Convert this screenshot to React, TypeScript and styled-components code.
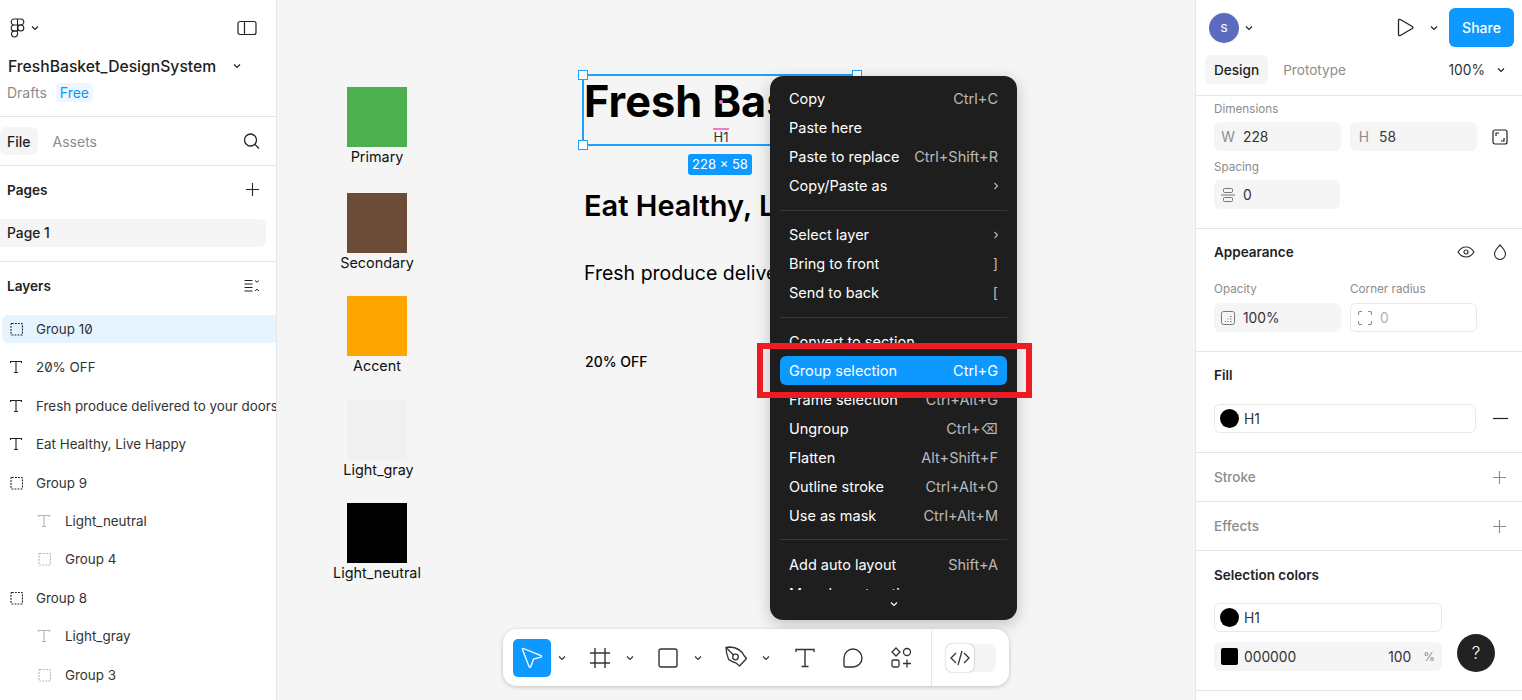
import styled, { createGlobalStyle } from 'styled-components'
import type { ReactNode } from 'react'

const GlobalStyle = createGlobalStyle`
  html, body {
    margin: 0;
    padding: 0;
    background: #fff;
  }
  body {
    font-family: Inter, "Noto Sans", "DejaVu Sans", sans-serif;
    font-size: 14px;
    color: #222;
  }
  * {
    box-sizing: border-box;
  }
`

const Page = styled.div`
  display: grid;
  grid-template-columns: 277px 1fr 327px;
  width: 1522px;
  height: 700px;
  overflow: hidden;
`

/* ---------- left panel ---------- */

const LeftPanel = styled.aside`
  display: flex;
  flex-direction: column;
  height: 700px;
  overflow: hidden;
  background: #fff;
  border-right: 1px solid #e6e6e6;
`

const PanelHeader = styled.header`
  height: 117px;
  border-bottom: 1px solid #e6e6e6;
`

const LogoRow = styled.div`
  display: flex;
  align-items: center;
  height: 56px;
  padding: 0 19px 0 10px;
  gap: 6px;
  color: #222;
`

const Spacer = styled.div`
  flex: 1;
`

const TitleRow = styled.div`
  display: flex;
  align-items: center;
  height: 20px;
  padding: 0 35px 0 8px;
  font-size: 15.7px;
  font-weight: 500;
  color: #1e1e1e;
`

const MetaRow = styled.div`
  display: flex;
  align-items: center;
  gap: 9px;
  height: 20px;
  margin-top: 6px;
  padding-left: 7px;
  font-size: 14px;
  color: #8c8c8c;
`

const FreeBadge = styled.span`
  padding: 1px 4px;
  border-radius: 4px;
  background: #eef7ff;
  color: #0d99ff;
`

const TabRow = styled.div`
  display: flex;
  align-items: center;
  height: 49px;
  padding-right: 16px;
  border-bottom: 1px solid #e6e6e6;
`

const Tab = styled.div<{ $active?: boolean; $inset?: number }>`
  display: flex;
  align-items: center;
  height: 28px;
  padding: 0 7px;
  margin-left: ${({ $inset }) => $inset ?? 0}px;
  border-radius: 6px;
  background: ${({ $active }) => ($active ? '#f5f5f5' : 'transparent')};
  color: ${({ $active }) => ($active ? '#1e1e1e' : '#8c8c8c')};
  font-weight: ${({ $active }) => ($active ? 500 : 400)};
  font-size: 14px;
`

const PagesSection = styled.section`
  height: 96px;
  border-bottom: 1px solid #e6e6e6;
`

const SectionHead = styled.div`
  display: flex;
  align-items: center;
  justify-content: space-between;
  height: 48px;
  padding: 0 16px 1px 7px;
  font-size: 13.6px;
  font-weight: 600;
  color: #222;
`

const PageRow = styled.div`
  display: flex;
  align-items: center;
  width: 266px;
  height: 28px;
  margin-top: 5px;
  padding-left: 7px;
  border-radius: 0 6px 6px 0;
  background: #f5f5f5;
  font-weight: 500;
  font-size: 13.8px;
`

const LayerList = styled.div`
  display: flex;
  flex-direction: column;
  gap: 10.4px;
  margin-top: 5px;
`

const LayerRow = styled.div<{ $selected?: boolean; $nested?: boolean }>`
  display: flex;
  flex: none;
  align-items: center;
  gap: ${({ $nested }) => ($nested ? 14 : 13)}px;
  height: 28px;
  margin-left: 2px;
  padding-left: ${({ $nested }) => ($nested ? 35 : 7)}px;
  border-radius: 6px 0 0 6px;
  background: ${({ $selected }) => ($selected ? '#e5f4ff' : 'transparent')};
  color: #333;
  font-size: 13.4px;
  font-feature-settings: 'zero' 1;
  white-space: nowrap;
  overflow: hidden;
`

const LayerIcon = styled.span<{ $muted?: boolean }>`
  display: flex;
  flex: none;
  color: ${({ $muted }) => ($muted ? '#b3b3b3' : '#222')};
`

/* ---------- canvas ---------- */

const Canvas = styled.main`
  position: relative;
  height: 700px;
  overflow: hidden;
  background: #f5f5f5;
`

const SwatchGroup = styled.div<{ $top: number }>`
  position: absolute;
  left: 70px;
  top: ${({ $top }) => $top}px;
  display: flex;
  flex-direction: column;
  align-items: center;
  width: 60px;
  color: #111;
  font-size: 14.4px;
  line-height: 18px;
  white-space: nowrap;
`

const SwatchBox = styled.div<{ $color: string }>`
  width: 60px;
  height: 60px;
  background: ${({ $color }) => $color};
`

const SwatchName = styled.span<{ $shift?: number }>`
  margin-top: 1px;
  margin-left: ${({ $shift }) => $shift ?? 0}px;
`

const CanvasText = styled.div<{ $left: number; $top: number; $size: number; $weight: number }>`
  position: absolute;
  left: ${({ $left }) => $left}px;
  top: ${({ $top }) => $top}px;
  font-size: ${({ $size }) => $size}px;
  font-weight: ${({ $weight }) => $weight};
  line-height: 1.2;
  color: #000;
  white-space: nowrap;
`

const SelectionBox = styled.div`
  position: absolute;
  left: 305px;
  top: 74px;
  width: 276px;
  height: 72px;
  border: 2px solid #1ba1ff;
`

const Handle = styled.span<{ $right?: boolean; $bottom?: boolean }>`
  position: absolute;
  ${({ $right }) => ($right ? 'right: -6px;' : 'left: -6px;')}
  ${({ $bottom }) => ($bottom ? 'bottom: -6px;' : 'top: -6px;')}
  width: 10px;
  height: 10px;
  background: #fff;
  border: 1.5px solid #1ba1ff;
`

const SizeBadge = styled.div`
  position: absolute;
  left: 411px;
  top: 154px;
  width: 64px;
  height: 21px;
  border-radius: 3px;
  background: #0d99ff;
  color: #fff;
  font-size: 13px;
  line-height: 21px;
  text-align: center;
`

const GuideLabel = styled.div`
  position: absolute;
  left: 436px;
  top: 128px;
  width: 16px;
  border-top: 2px solid #f57ac8;
  color: #333;
  font-size: 13px;
  line-height: 15px;
  text-align: center;
  &::after {
    content: '';
    position: absolute;
    left: 7px;
    top: 1px;
    height: 11px;
    border-left: 1.5px dotted #f57ac8;
  }
`

const GuideDot = styled.span`
  position: absolute;
  left: 442px;
  top: 100px;
  width: 4px;
  height: 4px;
  border-radius: 50%;
  background: #f57ac8;
`

/* ---------- context menu ---------- */

const Menu = styled.div`
  position: absolute;
  left: 493px;
  top: 76px;
  display: flex;
  flex-direction: column;
  width: 247px;
  height: 544px;
  padding: 8px 10px 0;
  border-radius: 13px;
  background: #1e1e1e;
  box-shadow: 0 4px 16px rgba(0, 0, 0, 0.22);
`

const MenuScroll = styled.div`
  flex: none;
  height: 506px;
  overflow: hidden;
`

const MenuItem = styled.div<{ $active?: boolean }>`
  display: flex;
  align-items: center;
  justify-content: space-between;
  height: 29px;
  padding: 0 9px;
  border-radius: 6px;
  background: ${({ $active }) => ($active ? '#0d99ff' : 'transparent')};
  color: #fff;
  font-size: 14.5px;
  white-space: nowrap;
`

const Shortcut = styled.span<{ $active?: boolean }>`
  font-family: Inter, "DejaVu Sans", sans-serif;
  color: ${({ $active }) => ($active ? '#fff' : 'rgba(255, 255, 255, 0.7)')};
`

const MenuDivider = styled.div<{ $height?: number }>`
  display: flex;
  align-items: center;
  height: ${({ $height }) => $height ?? 20}px;
  &::after {
    content: '';
    width: 100%;
    height: 1px;
    background: #383838;
  }
`

const MenuFooter = styled.div`
  display: flex;
  justify-content: center;
  padding-top: 10px;
  color: #fff;
`

const RedFrame = styled.div`
  position: absolute;
  left: 480px;
  top: 343px;
  width: 275px;
  height: 55px;
  border: 6px solid #ed1c24;
`

/* ---------- toolbar ---------- */

const Toolbar = styled.div`
  position: absolute;
  left: 226px;
  top: 629px;
  display: flex;
  align-items: center;
  width: 506px;
  height: 57px;
  padding-left: 10px;
  border-radius: 14px;
  background: #fff;
  box-shadow: 0 1px 4px rgba(0, 0, 0, 0.22);
`

const ToolGroup = styled.div`
  display: flex;
  align-items: center;
  gap: 10.2px;
`

const ToolSlot = styled.div`
  display: flex;
  align-items: center;
`

const Tool = styled.div<{ $active?: boolean }>`
  display: flex;
  align-items: center;
  justify-content: center;
  width: 38px;
  height: 38px;
  border-radius: 5px;
  background: ${({ $active }) => ($active ? '#0d99ff' : 'transparent')};
  color: ${({ $active }) => ($active ? '#fff' : '#333')};
`

const ToolCaret = styled.div`
  display: flex;
  justify-content: center;
  width: 20px;
  padding-left: 1px;
  color: #333;
`

const ToolDivider = styled.div`
  width: 1px;
  height: 57px;
  margin: 0 14px 0 11px;
  background: #e6e6e6;
`

const CodeToggle = styled.div`
  width: 50px;
  height: 28px;
  border-radius: 6px;
  background: #f5f5f5;
`

const CodeKnob = styled.div`
  display: flex;
  align-items: center;
  justify-content: center;
  width: 28px;
  height: 28px;
  border-radius: 6px;
  background: #fff;
  box-shadow: 0 0 2px rgba(0, 0, 0, 0.35);
  color: #333;
`

/* ---------- right panel ---------- */

const RightPanel = styled.aside`
  position: relative;
  display: flex;
  flex-direction: column;
  height: 700px;
  overflow: hidden;
  background: #fff;
  border-left: 1px solid #e6e6e6;
`

const TopBar = styled.div`
  display: flex;
  align-items: center;
  height: 55px;
  padding: 0 8px 0 13px;
`

const Avatar = styled.div`
  display: flex;
  align-items: center;
  justify-content: center;
  width: 30px;
  height: 30px;
  border-radius: 50%;
  background: #5c6bc0;
  color: #fff;
  font-size: 11px;
  font-weight: 500;
`

const IconSlot = styled.span<{ $width: number; $color?: string }>`
  display: flex;
  flex: none;
  align-items: center;
  justify-content: center;
  width: ${({ $width }) => $width}px;
  color: ${({ $color }) => $color ?? '#222'};
`

const PlayButton = styled.span`
  display: flex;
  margin-right: 10px;
  color: #222;
`

const ShareButton = styled.div`
  display: flex;
  align-items: center;
  justify-content: center;
  width: 65px;
  height: 39px;
  margin-left: 5px;
  border-radius: 6px;
  background: #0d99ff;
  color: #fff;
  font-size: 14px;
  font-weight: 500;
`

const DesignTabs = styled.div`
  display: flex;
  align-items: center;
  height: 41px;
  padding: 0 9px 11px 9px;
  border-bottom: 1px solid #e6e6e6;
`

const DesignTab = styled.div<{ $active?: boolean }>`
  display: flex;
  align-items: center;
  height: 29px;
  padding: 0 9px;
  margin-left: ${({ $active }) => ($active ? 0 : 6)}px;
  border-radius: 6px;
  background: ${({ $active }) => ($active ? '#f5f5f5' : 'transparent')};
  color: ${({ $active }) => ($active ? '#1e1e1e' : '#8c8c8c')};
  font-weight: ${({ $active }) => ($active ? 500 : 400)};
  font-size: 13.6px;
`

const ZoomValue = styled.span`
  margin-right: 4px;
  color: #333;
  font-size: 13.8px;
`

const Section = styled.section<{ $height: number }>`
  flex: none;
  height: ${({ $height }) => $height}px;
  padding: 0 15px 0 18px;
  border-bottom: 1px solid #e6e6e6;
`

const SmallLabel = styled.div<{ $top?: number; $width?: number }>`
  width: ${({ $width }) => ($width ? `${$width}px` : 'auto')};
  height: 14px;
  margin-top: ${({ $top }) => $top ?? 0}px;
  font-size: 11.7px;
  line-height: 14px;
  color: #8c8c8c;
`

const FieldRow = styled.div<{ $top?: number }>`
  display: flex;
  align-items: center;
  gap: 9px;
  margin-top: ${({ $top }) => $top ?? 0}px;
`

const Field = styled.div<{ $width: number; $outline?: boolean; $muted?: boolean }>`
  display: flex;
  flex: none;
  align-items: center;
  gap: 8px;
  width: ${({ $width }) => $width}px;
  height: 29px;
  padding: 0 7px;
  border-radius: 6px;
  background: ${({ $outline }) => ($outline ? '#fff' : '#f5f5f5')};
  border: ${({ $outline }) => ($outline ? '1px solid #e9e9e9' : 'none')};
  color: ${({ $muted }) => ($muted ? '#b3b3b3' : '#333')};
  font-size: 13.8px;
`

const StyleField = styled(Field)`
  gap: 5px;
  padding-left: 5px;
`

const FieldPrefix = styled.span`
  width: 14px;
  color: #8c8c8c;
  text-align: center;
`

const SectionTitle = styled.div<{ $muted?: boolean; $height?: number }>`
  display: flex;
  align-items: center;
  justify-content: space-between;
  height: ${({ $height }) => $height ?? 48}px;
  font-size: 13.5px;
  font-weight: ${({ $muted }) => ($muted ? 500 : 600)};
  color: ${({ $muted }) => ($muted ? '#8c8c8c' : '#222')};
`

const IconGroup = styled.div`
  display: flex;
  align-items: center;
  gap: 18px;
  color: #333;
`

const Dot = styled.span`
  flex: none;
  width: 19px;
  height: 19px;
  border-radius: 50%;
  background: #000;
`

const Square = styled.span`
  flex: none;
  width: 17px;
  height: 17px;
  border-radius: 2px;
  background: #000;
`

const ColorField = styled(Field)`
  gap: 6px;
`

const ColorValue = styled.span`
  flex: 1;
`

const Percent = styled.span`
  margin-left: 6px;
  font-size: 12px;
  color: #8c8c8c;
`

const HelpButton = styled.div`
  position: absolute;
  left: 261px;
  top: 634px;
  display: flex;
  align-items: center;
  justify-content: center;
  width: 38px;
  height: 38px;
  border-radius: 50%;
  background: #222;
  color: #fff;
  font-size: 17px;
  font-weight: 300;
`

/* ---------- icons ---------- */

const Icon = ({ size = 16, box = 16, width = 1, children }: { size?: number; box?: number; width?: number; children: ReactNode }) => (
  <svg width={size} height={size} viewBox={`0 0 ${box} ${box}`} fill="none" stroke="currentColor" strokeWidth={width}>
    {children}
  </svg>
)

const Caret = ({ size = 8 }: { size?: number }) => (
  <svg width={size} height={size} viewBox="0 0 8 8" fill="none" stroke="currentColor" strokeWidth="1.2">
    <path d="M1 2.5 4 5.5 7 2.5" />
  </svg>
)

const FigmaLogo = () => (
  <svg width="15" height="20" viewBox="0 0 15 20" fill="none" stroke="currentColor" strokeWidth="1.1">
    <path d="M7.5 1H4.2a3 3 0 0 0 0 6h3.3zM7.5 1h3.3a3 3 0 0 1 0 6H7.5zM7.5 7H4.2a3 3 0 0 0 0 6h3.3z" />
    <circle cx="10.8" cy="10" r="3" />
    <path d="M7.5 13H4.2a3 3 0 1 0 3.3 3z" />
  </svg>
)

const SidebarIcon = () => (
  <svg width="20" height="16" viewBox="0 0 20 16" fill="none" stroke="currentColor" strokeWidth="1.2">
    <rect x="1" y="1.5" width="18" height="13" rx="2" />
    <path d="M7.5 1.5v13" />
  </svg>
)

const SearchIcon = () => (
  <Icon size={18} box={18} width={1.3}>
    <circle cx="8.5" cy="8" r="6" />
    <path d="M12.9 12.4 17 16.5" />
  </Icon>
)

const PlusIcon = () => (
  <Icon size={15} box={15} width={1.1}>
    <path d="M7.5 1v13M1 7.5h13" />
  </Icon>
)

const CollapseIcon = () => (
  <svg width="16" height="14" viewBox="0 0 16 14" fill="none" stroke="currentColor" strokeWidth="1">
    <path d="M0.5 1.5h8M0.5 5h8M0.5 8.5h8M0.5 12h8M11 1.5l2 1.8 2-1.8M11 12l2-1.8 2 1.8" />
  </svg>
)

const GroupIcon = () => (
  <Icon size={14} box={14} width={1.2}>
    <rect x="2" y="1.5" width="11.5" height="11.5" rx="1" strokeDasharray="1.8 1.2" />
  </Icon>
)

const TextLayerIcon = () => (
  <Icon size={14} box={14} width={1.1}>
    <path d="M1.5 3V1.5h11V3M7 1.5V12.5M5 12.5h4" />
  </Icon>
)

const PlayIcon = () => (
  <svg width="17" height="19" viewBox="0 0 17 19" fill="none" stroke="currentColor" strokeWidth="1.3">
    <path d="M1.5 2.5c0-1 1-1.5 1.8-1l12 7c.8.5.8 1.5 0 2l-12 7c-.8.5-1.8 0-1.8-1z" />
  </svg>
)

const ResizeIcon = () => (
  <Icon size={16} box={16} width={1.2}>
    <rect x="1" y="1" width="14" height="14" rx="2" />
    <path d="M4 7V4h3M12 9v3H9" />
  </Icon>
)

const SpacingIcon = () => (
  <svg width="14" height="14" viewBox="0 0 14 14" fill="none" stroke="#777" strokeWidth="1">
    <rect x="2.5" y="0.5" width="9" height="4" rx="1" />
    <rect x="2.5" y="9.5" width="9" height="4" rx="1" />
    <path d="M0 7h14" />
  </svg>
)

const EyeIcon = () => (
  <svg width="18" height="12" viewBox="0 0 18 12" fill="none" stroke="currentColor" strokeWidth="1.2">
    <path d="M1 6c2-3.2 4.7-5 8-5s6 1.8 8 5c-2 3.2-4.7 5-8 5S3 9.2 1 6z" />
    <circle cx="9" cy="6" r="2" />
  </svg>
)

const DropIcon = () => (
  <svg width="14" height="16" viewBox="0 0 14 16" fill="none" stroke="currentColor" strokeWidth="1.2">
    <path d="M7 1c2.5 3 5.5 5.5 5.5 9a5.500 5.500 0 0 1-11 0C1.500 6.500 4.500 4 7 1z" />
  </svg>
)

const OpacityIcon = () => (
  <svg width="14" height="14" viewBox="0 0 14 14" fill="none" stroke="#777" strokeWidth="1">
    <rect x="0.5" y="0.5" width="13" height="13" rx="2" />
    <path d="M4 10.5h1M6.5 10.5h1M9 10.5h1.5M6.5 8h1M9 8h1.5M9 5.500h1.500" />
  </svg>
)

const CornerIcon = () => (
  <svg width="14" height="14" viewBox="0 0 14 14" fill="none" stroke="#8c8c8c" strokeWidth="1.1">
    <path d="M0.5 4V2a1.5 1.5 0 0 1 1.5-1.5h2M10 0.5h2A1.5 1.5 0 0 1 13.5 2v2M13.5 10v2a1.5 1.5 0 0 1-1.5 1.5h-2M4 13.5H2A1.5 1.5 0 0 1 0.5 12v-2" />
  </svg>
)

const MinusIcon = () => (
  <svg width="15" height="3" viewBox="0 0 15 3" stroke="currentColor" strokeWidth="1.2">
    <path d="M0 1.5h15" />
  </svg>
)

const SubmenuArrow = () => (
  <svg width="4" height="8" viewBox="0 0 4 8" fill="none" stroke="#bbb" strokeWidth="1.1">
    <path d="M0.5 1 3.5 4 0.5 7" />
  </svg>
)

const CursorTool = () => (
  <svg width="22" height="22" viewBox="0 0 22 22" fill="none" stroke="currentColor" strokeWidth="1.3" strokeLinejoin="round">
    <path d="M1.5 2.5c-.3-.8.3-1.3 1-1l17.500 7.200c.8.300.7 1.300-.1 1.500l-7.400 2-2.800 7.600c-.3.8-1.300.8-1.600 0z" />
  </svg>
)

const FrameTool = () => (
  <svg width="20" height="20" viewBox="0 0 20 20" fill="none" stroke="currentColor" strokeWidth="1.4">
    <path d="M5 0v20M15 0v20M0 5h20M0 15h20" />
  </svg>
)

const RectTool = () => (
  <svg width="20" height="20" viewBox="0 0 20 20" fill="none" stroke="currentColor" strokeWidth="1.4">
    <rect x="1" y="1" width="18" height="18" rx="2" />
  </svg>
)

const PenTool = () => (
  <svg width="23" height="23" viewBox="0 0 23 23" fill="none" stroke="currentColor" strokeWidth="1.3" strokeLinejoin="round">
    <path d="M1 1.5 5 1c6.500.5 11.500 3.500 14 8.500l2.500 3-7 7.500-3.500-3C7 15.500 4 14.500 3.500 13 2 9.500 1 5.500 1 1.500z" />
    <circle cx="10.5" cy="11" r="2.8" />
    <path d="M1.5 2l7 7" />
  </svg>
)

const TextTool = () => (
  <svg width="20" height="20" viewBox="0 0 20 20" fill="none" stroke="currentColor" strokeWidth="1.4">
    <path d="M1 4V1.5h18V4M10 1.5v17M6.5 18.5h7" />
  </svg>
)

const CommentTool = () => (
  <svg width="20" height="20" viewBox="0 0 20 20" fill="none" stroke="currentColor" strokeWidth="1.4">
    <path d="M10 1a9 9 0 0 1 0 18H2.5A1.5 1.5 0 0 1 1 17.500V10a9 9 0 0 1 9-9z" />
  </svg>
)

const ActionsTool = () => (
  <svg width="23" height="21" viewBox="0 0 23 21" fill="none" stroke="currentColor" strokeWidth="1.3">
    <path d="M6 1 10 5 6 9 2 5z" />
    <circle cx="17" cy="5" r="3.5" />
    <rect x="2" y="13" width="7" height="7" rx="1.5" />
    <path d="M17 12.5v8M13 16.5h8" />
  </svg>
)

const CodeIcon = () => (
  <svg width="20" height="16" viewBox="0 0 20 16" fill="none" stroke="currentColor" strokeWidth="1.3">
    <path d="M6 3 1 8l5 5M14 3l5 5-5 5M12 1 8 15" />
  </svg>
)

/* ---------- data ---------- */

const layers = [
  { name: 'Group 10', kind: 'group', selected: true },
  { name: '20% OFF', kind: 'text' },
  { name: 'Fresh produce delivered to your doorstep', kind: 'text' },
  { name: 'Eat Healthy, Live Happy', kind: 'text' },
  { name: 'Group 9', kind: 'group' },
  { name: 'Light_neutral', kind: 'text', nested: true },
  { name: 'Group 4', kind: 'group', nested: true },
  { name: 'Group 8', kind: 'group' },
  { name: 'Light_gray', kind: 'text', nested: true },
  { name: 'Group 3', kind: 'group', nested: true },
]

const swatches = [
  { name: 'Primary', color: '#4caf50', top: 87 },
  { name: 'Secondary', color: '#6d4c37', top: 193 },
  { name: 'Accent', color: '#ffa500', top: 296 },
  { name: 'Light_gray', color: '#f0f0f0', top: 400, shift: 3 },
  { name: 'Light_neutral', color: '#000000', top: 503 },
]

type MenuEntry = { label?: string; keys?: string; sub?: boolean; active?: boolean; gap?: number }

const menu: MenuEntry[] = [
  { label: 'Copy', keys: 'Ctrl+C' },
  { label: 'Paste here' },
  { label: 'Paste to replace', keys: 'Ctrl+Shift+R' },
  { label: 'Copy/Paste as', sub: true },
  { gap: 20 },
  { label: 'Select layer', sub: true },
  { label: 'Bring to front', keys: ']' },
  { label: 'Send to back', keys: '[' },
  { gap: 20 },
  { label: 'Convert to section' },
  { label: 'Group selection', keys: 'Ctrl+G', active: true },
  { label: 'Frame selection', keys: 'Ctrl+Alt+G' },
  { label: 'Ungroup', keys: 'Ctrl+⌫' },
  { label: 'Flatten', keys: 'Alt+Shift+F' },
  { label: 'Outline stroke', keys: 'Ctrl+Alt+O' },
  { label: 'Use as mask', keys: 'Ctrl+Alt+M' },
  { gap: 19.5 },
  { label: 'Add auto layout', keys: 'Shift+A' },
  { label: 'More layout options', sub: true },
]

const tools = [
  { icon: <CursorTool />, active: true, caret: true },
  { icon: <FrameTool />, caret: true },
  { icon: <RectTool />, caret: true },
  { icon: <PenTool />, caret: true },
  { icon: <TextTool /> },
  { icon: <CommentTool /> },
  { icon: <ActionsTool /> },
]

const App = () => (
  <Page>
    <GlobalStyle />
    <LeftPanel>
      <PanelHeader>
        <LogoRow>
          <FigmaLogo />
          <Caret />
          <Spacer />
          <SidebarIcon />
        </LogoRow>
        <TitleRow>
          FreshBasket_DesignSystem
          <Spacer />
          <Caret />
        </TitleRow>
        <MetaRow>
          Drafts
          <FreeBadge>Free</FreeBadge>
        </MetaRow>
      </PanelHeader>
      <TabRow>
        <Tab $active>File</Tab>
        <Tab $inset={8}>Assets</Tab>
        <Spacer />
        <SearchIcon />
      </TabRow>
      <PagesSection>
        <SectionHead>
          Pages
          <PlusIcon />
        </SectionHead>
        <PageRow>Page 1</PageRow>
      </PagesSection>
      <SectionHead>
        Layers
        <CollapseIcon />
      </SectionHead>
      <LayerList>
        {layers.map((layer) => (
          <LayerRow key={layer.name} $selected={layer.selected} $nested={layer.nested}>
            <LayerIcon $muted={layer.nested}>
              {layer.kind === 'group' ? <GroupIcon /> : <TextLayerIcon />}
            </LayerIcon>
            {layer.name}
          </LayerRow>
        ))}
      </LayerList>
    </LeftPanel>

    <Canvas>
      {swatches.map((swatch) => (
        <SwatchGroup key={swatch.name} $top={swatch.top}>
          <SwatchBox $color={swatch.color} />
          <SwatchName $shift={swatch.shift}>{swatch.name}</SwatchName>
        </SwatchGroup>
      ))}

      <CanvasText $left={307} $top={76} $size={43.3} $weight={700}>Fresh Basket</CanvasText>
      <CanvasText $left={307} $top={189} $size={29} $weight={600}>Eat Healthy, Live Happy</CanvasText>
      <CanvasText $left={307} $top={262} $size={19.5} $weight={400}>Fresh produce delivered to your doorstep</CanvasText>
      <CanvasText $left={308} $top={354} $size={14} $weight={500}>20% OFF</CanvasText>

      <SelectionBox>
        <Handle />
        <Handle $right />
        <Handle $bottom />
        <Handle $right $bottom />
      </SelectionBox>
      <GuideDot />
      <GuideLabel>H1</GuideLabel>
      <SizeBadge>228 × 58</SizeBadge>

      <Menu>
        <MenuScroll>
          {menu.map((entry, index) =>
            entry.label ? (
              <MenuItem key={entry.label} $active={entry.active}>
                {entry.label}
                {entry.keys && <Shortcut $active={entry.active}>{entry.keys}</Shortcut>}
                {entry.sub && <SubmenuArrow />}
              </MenuItem>
            ) : (
              <MenuDivider key={index} $height={entry.gap} />
            ),
          )}
        </MenuScroll>
        <MenuFooter>
          <Caret />
        </MenuFooter>
      </Menu>
      <RedFrame />

      <Toolbar>
        <ToolGroup>
          {tools.map((tool, index) => (
            <ToolSlot key={index}>
              <Tool $active={tool.active}>{tool.icon}</Tool>
              {tool.caret && (
                <ToolCaret>
                  <Caret />
                </ToolCaret>
              )}
            </ToolSlot>
          ))}
        </ToolGroup>
        <ToolDivider />
        <CodeToggle>
          <CodeKnob>
            <CodeIcon />
          </CodeKnob>
        </CodeToggle>
      </Toolbar>
    </Canvas>

    <RightPanel>
      <TopBar>
        <Avatar>S</Avatar>
        <IconSlot $width={20}>
          <Caret />
        </IconSlot>
        <Spacer />
        <PlayButton>
          <PlayIcon />
        </PlayButton>
        <IconSlot $width={20}>
          <Caret />
        </IconSlot>
        <ShareButton>Share</ShareButton>
      </TopBar>
      <DesignTabs>
        <DesignTab $active>Design</DesignTab>
        <DesignTab>Prototype</DesignTab>
        <Spacer />
        <ZoomValue>100%</ZoomValue>
        <IconSlot $width={24}>
          <Caret />
        </IconSlot>
      </DesignTabs>
      <Section $height={133}>
        <SmallLabel $top={6}>Dimensions</SmallLabel>
        <FieldRow $top={6}>
          <Field $width={127}>
            <FieldPrefix>W</FieldPrefix>
            228
          </Field>
          <Field $width={127}>
            <FieldPrefix>H</FieldPrefix>
            58
          </Field>
          <IconSlot $width={28}>
            <ResizeIcon />
          </IconSlot>
        </FieldRow>
        <SmallLabel $top={9}>Spacing</SmallLabel>
        <FieldRow $top={6}>
          <Field $width={126}>
            <SpacingIcon />
            <span>0</span>
          </Field>
        </FieldRow>
      </Section>
      <Section $height={123}>
        <SectionTitle $height={46}>
          Appearance
          <IconGroup>
            <EyeIcon />
            <DropIcon />
          </IconGroup>
        </SectionTitle>
        <FieldRow $top={7}>
          <SmallLabel $width={127}>Opacity</SmallLabel>
          <SmallLabel>Corner radius</SmallLabel>
        </FieldRow>
        <FieldRow $top={7}>
          <Field $width={127}>
            <OpacityIcon />
            100%
          </Field>
          <Field $width={127} $outline $muted>
            <CornerIcon />
            0
          </Field>
        </FieldRow>
      </Section>
      <Section $height={101}>
        <SectionTitle $height={46}>Fill</SectionTitle>
        <FieldRow $top={6}>
          <StyleField $width={262} $outline>
            <Dot />
            <span>H1</span>
          </StyleField>
          <IconSlot $width={30}>
            <MinusIcon />
          </IconSlot>
        </FieldRow>
      </Section>
      <Section $height={49}>
        <SectionTitle $muted>
          Stroke
          <PlusIcon />
        </SectionTitle>
      </Section>
      <Section $height={49}>
        <SectionTitle $muted>
          Effects
          <PlusIcon />
        </SectionTitle>
      </Section>
      <Section $height={140}>
        <SectionTitle $height={47}>Selection colors</SectionTitle>
        <FieldRow $top={5}>
          <StyleField $width={228} $outline>
            <Dot />
            <span>H1</span>
          </StyleField>
        </FieldRow>
        <FieldRow $top={10}>
          <ColorField $width={228}>
            <Square />
            <ColorValue>000000</ColorValue>
            100
            <Percent>%</Percent>
          </ColorField>
        </FieldRow>
      </Section>
      <HelpButton>?</HelpButton>
    </RightPanel>
  </Page>
)

export default App
